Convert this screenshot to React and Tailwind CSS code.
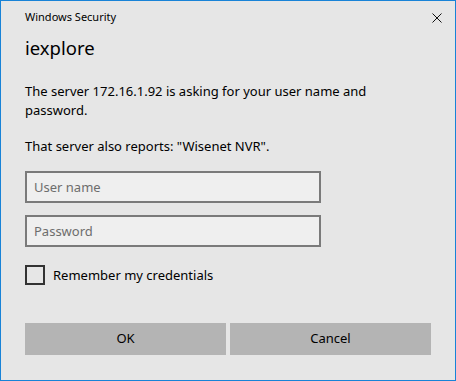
export default function App() {
  const font = { fontFamily: '"Noto Sans", "Open Sans", sans-serif' };
  return (
    <div
      className="w-[456px] h-[381px] border border-[#1883d7] bg-[#e6e6e6] text-black flex flex-col px-[24px]"
      style={font}
    >
      <div className="flex items-start justify-between pt-[8px]">
        <div className="text-[11px] leading-[16px]">Windows Security</div>
        <svg width="10" height="10" viewBox="0 0 10 10" className="mt-[4px] mr-[-11px]">
          <path d="M0.5 0.5 L9.5 9.5 M9.5 0.5 L0.5 9.5" stroke="#111" strokeWidth="1" fill="none" />
        </svg>
      </div>

      <div className="mt-[9px] text-[18.5px] leading-[28px]">iexplore</div>

      <div className="mt-[20px] text-[13px] leading-[19px]">
        The server 172.16.1.92 is asking for your user name and password.
      </div>
      <div className="mt-[17px] text-[13px] leading-[19px]">
        That server also reports: "Wisenet NVR".
      </div>

      <input
        className="mt-[15px] w-[296px] h-[32px] border-2 border-[#7a7a7a] bg-[#efefef] px-[7px] text-[13px] placeholder:text-[#6d6d6d] outline-none"
        placeholder="User name"
        style={font}
      />
      <input
        className="mt-[12px] w-[296px] h-[32px] border-2 border-[#7a7a7a] bg-[#efefef] px-[7px] text-[13px] placeholder:text-[#6d6d6d] outline-none"
        placeholder="Password"
        type="password"
        style={font}
      />

      <label className="mt-[18px] flex items-center gap-[8px]">
        <span className="w-[20px] h-[20px] border-2 border-[#333333]" />
        <span className="text-[13px] leading-[20px]">Remember my credentials</span>
      </label>

      <div className="mt-[38px] grid grid-cols-2 gap-[4px]">
        <button className="h-[32px] bg-[#b4b4b4] text-[13px]" style={font}>OK</button>
        <button className="h-[32px] bg-[#b4b4b4] text-[13px]" style={font}>Cancel</button>
      </div>
    </div>
  );
}
